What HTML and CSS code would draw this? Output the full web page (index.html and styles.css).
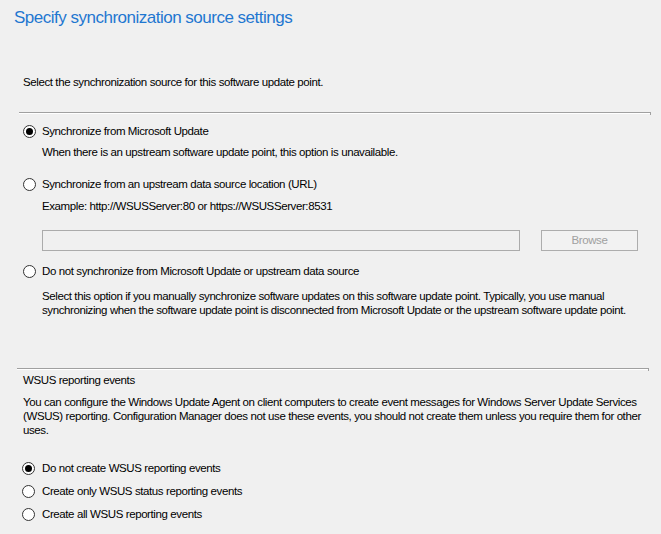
FILE: index.html
```html
<!DOCTYPE html>
<html>
<head>
<meta charset="utf-8">
<link rel="stylesheet" href="styles.css">
</head>
<body>
<div class="page">
  <h1 class="title">Specify synchronization source settings</h1>
  <p class="intro">Select the synchronization source for this software update point.</p>
  <div class="sep sep-top"></div>

  <div class="section">
    <div class="radio-row r1"><span class="radio checked"></span><span>Synchronize from Microsoft Update</span></div>
    <p class="note n1">When there is an upstream software update point, this option is unavailable.</p>

    <div class="radio-row r2"><span class="radio"></span><span>Synchronize from an upstream data source location (URL)</span></div>
    <p class="note n2">Example: http://WSUSServer:80 or https://WSUSServer:8531</p>

    <div class="url-row">
      <div class="textbox"></div>
      <div class="button">Browse</div>
    </div>

    <div class="radio-row r3"><span class="radio"></span><span>Do not synchronize from Microsoft Update or upstream data source</span></div>
    <p class="note n3">Select this option if you manually synchronize software updates on this software update point. Typically, you use manual<br>synchronizing when the software update point is disconnected from Microsoft Update or the upstream software update point.</p>
  </div>

  <div class="sep sep-bottom"></div>

  <div class="reporting">
    <p class="heading">WSUS reporting events</p>
    <p class="para">You can configure the Windows Update Agent on client computers to create event messages for Windows Server Update Services<br>(WSUS) reporting. Configuration Manager does not use these events, you should not create them unless you require them for other<br>uses.</p>
    <div class="options">
      <div class="radio-row"><span class="radio checked"></span><span>Do not create WSUS reporting events</span></div>
      <div class="radio-row"><span class="radio"></span><span>Create only WSUS status reporting events</span></div>
      <div class="radio-row"><span class="radio"></span><span>Create all WSUS reporting events</span></div>
    </div>
  </div>
</div>
</body>
</html>
```

FILE: styles.css
```css
html, body {
  margin: 0;
  padding: 0;
  background: #f0f0f0;
}
body {
  width: 661px;
  height: 534px;
  overflow: hidden;
  font-family: "Liberation Sans", Arial, sans-serif;
  font-size: 11.5px;
  letter-spacing: -0.4px;
  color: #000;
}
p { margin: 0; }
.page {
  display: flex;
  flex-direction: column;
}
.title {
  margin: 8px 0 0 14px;
  font-size: 17px;
  letter-spacing: -0.5px;
  line-height: 20px;
  font-weight: normal;
  color: #1f77d0;
}
.intro {
  margin: 47px 0 0 23px;
  line-height: 14px;
}
.sep {
  position: relative;
  height: 0;
  border-top: 1px solid #a0a0a0;
  border-bottom: 1px solid #ffffff;
}
.sep::after {
  content: "";
  position: absolute;
  right: 0;
  top: 0;
  width: 1px;
  height: 2px;
  background: #a0a0a0;
}
.sep-top { margin: 23px 10px 0 19px; }
.sep-bottom { margin: 51px 12px 0 17px; }

.section {
  display: flex;
  flex-direction: column;
  padding-left: 23px;
}
.radio-row {
  display: flex;
  align-items: center;
  gap: 6px;
  height: 14px;
  line-height: 14px;
  white-space: nowrap;
}
.radio {
  box-sizing: border-box;
  width: 13px;
  height: 13px;
  border: 1px solid #333;
  border-radius: 50%;
  background: #fff;
  flex: none;
  display: flex;
  align-items: center;
  justify-content: center;
}
.radio.checked::before {
  content: "";
  width: 7px;
  height: 7px;
  border-radius: 50%;
  background: #000;
}
.note {
  margin-left: 19px;
  line-height: 14px;
  white-space: nowrap;
}
.r1 { margin-top: 10px; }
.n1 { margin-top: 7px; }
.r2 { margin-top: 18px; }
.n2 { margin-top: 8px; }
.url-row {
  display: flex;
  margin: 17px 0 0 19px;
  gap: 21px;
}
.textbox {
  box-sizing: border-box;
  width: 478px;
  height: 21px;
  border: 1px solid #ababab;
  background: #f0f0f0;
}
.button {
  box-sizing: border-box;
  width: 97px;
  height: 21px;
  border: 1px solid #adadad;
  background: #f2f2f2;
  color: #a0a0a0;
  text-align: center;
  line-height: 19px;
}
.r3 { margin-top: 13px; }
.n3 { margin-top: 11px; }

.reporting {
  display: flex;
  flex-direction: column;
  padding-left: 23px;
}
.heading {
  margin-top: 3px;
  line-height: 14px;
}
.para {
  margin-top: 8px;
  line-height: 14px;
  white-space: nowrap;
}
.options {
  display: flex;
  flex-direction: column;
  gap: 9px;
  margin-top: 24px;
}
.options .radio-row { gap: 7px; margin-left: -1px; }
```
